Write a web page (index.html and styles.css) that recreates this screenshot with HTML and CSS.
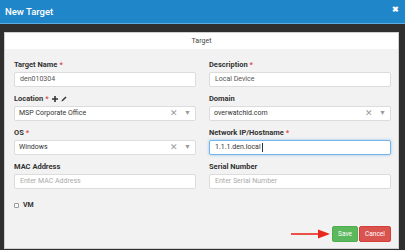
FILE: index.html
```html
<!DOCTYPE html>
<html lang="en">

<head>
    <meta charset="UTF-8">
    <meta name="viewport" content="width=device-width, initial-scale=1.0">
    <title>New Target</title>

    <link rel="stylesheet" href="styles.css">
</head>

<body>
    <div class="modal">
        <div class="modal-header">
            <span class="modal-title">New Target</span>
            <span class="close">&#x2716;</span>
        </div>

        <div class="modal-body">
            <div class="panel">
                <div class="panel-heading">Target</div>
                <div class="panel-body">
                    <div class="form-grid">
                        <div class="field">
                            <label>Target Name <span class="req">*</span></label>
                            <div class="input">den010304</div>
                        </div>
                        <div class="field">
                            <label>Description <span class="req">*</span></label>
                            <div class="input">Local Device</div>
                        </div>

                        <div class="field">
                            <label>Location <span class="req">*</span>
                                <svg class="ico" width="6" height="6" viewBox="0 0 6 6"><path d="M3 0v6M0 3h6" stroke="#333" stroke-width="1.6"/></svg>
                                <svg class="ico" width="6" height="6" viewBox="0 0 6 6"><path d="M0.5 5.5l1.4-0.4 3.6-3.6-1-1-3.6 3.6z" fill="#333"/></svg>
                            </label>
                            <div class="input select">
                                <span>MSP Corporate Office</span>
                                <span class="sel-icons"><span class="clear">&#x2715;</span><span class="caret">&#x25BC;</span></span>
                            </div>
                        </div>
                        <div class="field">
                            <label>Domain</label>
                            <div class="input select">
                                <span>overwatchid.com</span>
                                <span class="sel-icons"><span class="clear">&#x2715;</span><span class="caret">&#x25BC;</span></span>
                            </div>
                        </div>

                        <div class="field">
                            <label>OS <span class="req">*</span></label>
                            <div class="input select">
                                <span>Windows</span>
                                <span class="sel-icons"><span class="clear">&#x2715;</span><span class="caret">&#x25BC;</span></span>
                            </div>
                        </div>
                        <div class="field">
                            <label>Network IP/Hostname <span class="req">*</span></label>
                            <div class="input focus">1.1.1.den.local<span class="cursor"></span></div>
                        </div>

                        <div class="field">
                            <label>MAC Address</label>
                            <div class="input placeholder">Enter MAC Address</div>
                        </div>
                        <div class="field">
                            <label>Serial Number</label>
                            <div class="input placeholder">Enter Serial Number</div>
                        </div>
                    </div>

                    <div class="check-row">
                        <span class="checkbox"></span>
                        <span>VM</span>
                    </div>

                    <div class="actions">
                        <svg class="arrow" width="40" height="10" viewBox="0 0 40 10">
                            <path d="M0 5h30" stroke="#e8281c" stroke-width="1.6"/>
                            <path d="M27 0.5l12 4.5-12 4.5z" fill="#e8281c"/>
                        </svg>
                        <button class="btn btn-save">Save</button>
                        <button class="btn btn-cancel">Cancel</button>
                    </div>
                </div>
            </div>
        </div>
    </div>
</body>

</html>
```

FILE: styles.css
```css
* {
    margin: 0px;
    padding: 0px;
    box-sizing: border-box;
}

body {
    background-color: #2f2f2f;
    font-family: Roboto, "Liberation Sans", sans-serif;
    width: 405px;
    height: 250px;
    overflow: hidden;
}

.modal-header {
    height: 24px;
    background-color: #1f87c9;
    border-bottom: 1px solid #5aaee3;
    display: flex;
    justify-content: space-between;
    align-items: center;
    padding: 0 6px 1px 5px;
    color: white;
}

.modal-title {
    font-size: 9.5px;
    font-weight: 500;
}

.close {
    font-size: 8px;
    font-weight: bold;
    margin-top: -4px;
}

.modal-body {
    padding: 8px 6px 4px 4px;
}

.panel {
    border: 1px solid #cfcfcf;
    background-color: #f2f2f2;
}

.panel-heading {
    height: 16px;
    background-color: white;
    text-align: center;
    font-size: 7px;
    line-height: 16px;
    color: #444;
}

.panel-body {
    padding: 10px 7px 6px 9px;
}

.form-grid {
    display: grid;
    grid-template-columns: 182px 182px;
    column-gap: 13px;
}

.field {
    margin-bottom: 6px;
}

label {
    display: flex;
    align-items: center;
    gap: 2px;
    height: 11px;
    margin-bottom: 2px;
    font-size: 7.5px;
    font-weight: bold;
    color: #333;
}

.req {
    color: #d9534f;
}

.ico {
    margin-left: 1px;
}

.input {
    height: 15px;
    background-color: white;
    border: 1px solid #dcdcdc;
    border-radius: 2px;
    padding: 0 5px;
    font-size: 7px;
    line-height: 13px;
    color: #555;
    display: flex;
    align-items: center;
}

.placeholder {
    color: #aaa;
}

.select {
    justify-content: space-between;
    color: #333;
    padding-left: 4px;
    padding-right: 4px;
}

.sel-icons {
    display: flex;
    align-items: center;
    gap: 6px;
    color: #9a9a9a;
}

.clear {
    font-size: 9px;
}

.caret {
    font-size: 7px;
}

.focus {
    border-color: #77b5ea;
    box-shadow: 0 0 3px rgba(102, 175, 233, 0.7);
    color: #333;
}

.cursor {
    width: 1px;
    height: 9px;
    background-color: #333;
    margin-left: 1px;
}

.check-row {
    display: flex;
    align-items: center;
    gap: 4px;
    margin-top: 5px;
    height: 10px;
    font-size: 7px;
    font-weight: bold;
    color: #333;
}

.checkbox {
    width: 5px;
    height: 5px;
    border: 1px solid #999;
    background-color: white;
    border-radius: 1px;
}

.actions {
    display: flex;
    justify-content: flex-end;
    align-items: center;
    gap: 1px;
    margin-top: 16px;
}

.arrow {
    margin-right: 0px;
}

.btn {
    height: 16px;
    border: 1px solid;
    border-radius: 2px;
    color: white;
    font-family: Roboto, "Liberation Sans", sans-serif;
    font-size: 6.5px;
}

.btn-save {
    width: 26px;
    background-color: #5cb85c;
    border-color: #4cae4c;
}

.btn-cancel {
    width: 32px;
    background-color: #d9534f;
    border-color: #d43f3a;
}
```
